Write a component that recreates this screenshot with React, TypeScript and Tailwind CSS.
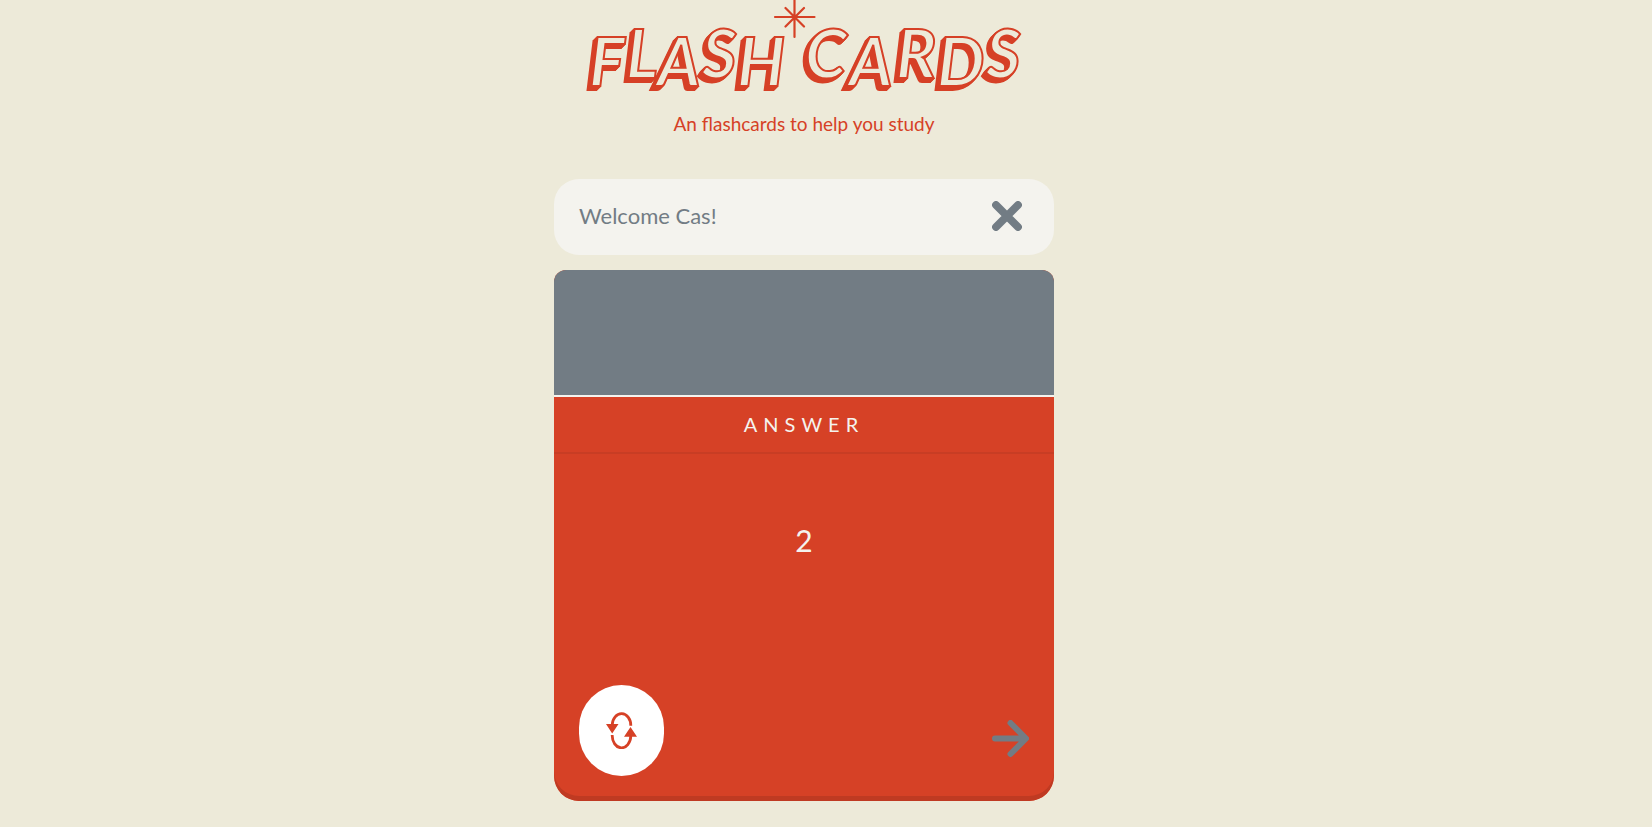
const LETTER_X = "589 626 657 702 737 781 805 849 896 937 986";
const LETTER_Y = "86 78 86 78 86 86 78 86 78 86 78";

function Logo() {
  return (
    <svg
      viewBox="554 0 500 94"
      className="block h-auto w-full overflow-visible"
      role="img"
      aria-label="Flash Cards"
    >
      <defs>
        <filter id="extrude" x="-5%" y="-20%" width="110%" height="140%">
          <feOffset in="SourceAlpha" dx="-1" dy="1" result="a" />
          <feOffset in="SourceAlpha" dx="-2" dy="2" result="b" />
          <feOffset in="SourceAlpha" dx="-3" dy="3" result="c" />
          <feOffset in="SourceAlpha" dx="-4" dy="4" result="d" />
          <feMerge result="all">
            <feMergeNode in="a" />
            <feMergeNode in="b" />
            <feMergeNode in="c" />
            <feMergeNode in="d" />
          </feMerge>
          <feFlood floodColor="#d64126" />
          <feComposite in2="all" operator="in" result="side" />
          <feMerge>
            <feMergeNode in="side" />
            <feMergeNode in="SourceGraphic" />
          </feMerge>
        </filter>
      </defs>
      <text
        x={LETTER_X}
        y={LETTER_Y}
        filter="url(#extrude)"
        className="fill-[#edead9] stroke-[#d64126] stroke-[2px] font-['Lato',sans-serif] text-[67px] font-bold italic"
      >
        FLASH CARDS
      </text>
      <path
        d="M794.500 -2V37M775 17H814.500M785.500 8L804 26.500M804 8L785.500 26.500"
        className="stroke-[#d64126]"
        strokeWidth="2.200"
        strokeLinecap="round"
      />
    </svg>
  );
}

function CloseIcon() {
  return (
    <svg viewBox="0 0 30 30" className="block size-[30px]" aria-hidden="true">
      <path d="M4 4L26 26M26 4L4 26" stroke="currentColor" strokeWidth="7.800" strokeLinecap="round" />
    </svg>
  );
}

function FlipIcon() {
  return (
    <svg viewBox="0 0 31 37" className="block h-[37px] w-[31px]" fill="none" aria-hidden="true">
      <path d="M6.200 13A9.300 11.700 0 0 1 24.800 13.800" stroke="currentColor" strokeWidth="2.800" />
      <path d="M6.200 23A9.300 12.300 0 0 0 24.800 24" stroke="currentColor" strokeWidth="2.800" />
      <path d="M0 12H12.500L6.200 21.500ZM18 24.800H31L24.500 15Z" fill="currentColor" />
    </svg>
  );
}

function ArrowIcon() {
  return (
    <svg viewBox="0 0 38 38" className="block size-[38px]" fill="none" aria-hidden="true">
      <path
        d="M4 18.500H34M19.500 3L35 18.500L19.500 34"
        stroke="currentColor"
        strokeWidth="6"
        strokeLinecap="round"
        strokeLinejoin="round"
      />
    </svg>
  );
}

export default function App() {
  return (
    <div className="min-h-screen bg-[#edead9] pr-11 pb-6 font-['Century_Gothic','URW_Gothic','Lato',sans-serif] font-normal">
      <main className="mx-auto flex max-w-[500px] flex-col">
        <h1>
          <Logo />
        </h1>
        <p className="pt-4 text-center text-[19px] leading-7 text-[#d64126]">
          An flashcards to help you study
        </p>

        <section className="mt-[41px] flex h-[76px] items-center justify-between rounded-[25px] bg-[#f4f3ee] pr-8 pb-[2px] pl-[25px] text-[#727c84]">
          <p className="text-[22px] leading-7">Welcome Cas!</p>
          <button type="button" aria-label="Close">
            <CloseIcon />
          </button>
        </section>

        <article className="mt-[15px] flex flex-col overflow-hidden rounded-t-xl rounded-b-[25px] bg-[#d64126] text-[#f4f3ee]">
          <div className="h-[125px] bg-[#727c84]" />
          <h2 className="border-t-2 border-b-2 border-t-[#f4f3ee] border-b-[#c83d24] py-[13px] text-center text-xl leading-[29px] font-normal tracking-[6px]">
            ANSWER
          </h2>
          <div className="flex flex-col rounded-b-[25px] px-[25px] pb-[25px] shadow-[inset_0_-5px_0_#bf3a22]">
            <p className="pt-16 pb-[122px] text-center text-3xl leading-[45px]">2</p>
            <div className="flex items-center justify-between">
              <button
                type="button"
                aria-label="Flip card"
                className="flex h-[91px] w-[85px] items-center justify-center rounded-[45px] bg-white text-[#d64126]"
              >
                <FlipIcon />
              </button>
              <button type="button" aria-label="Next card" className="pt-4 text-[#727c84]">
                <ArrowIcon />
              </button>
            </div>
          </div>
        </article>
      </main>
    </div>
  );
}
